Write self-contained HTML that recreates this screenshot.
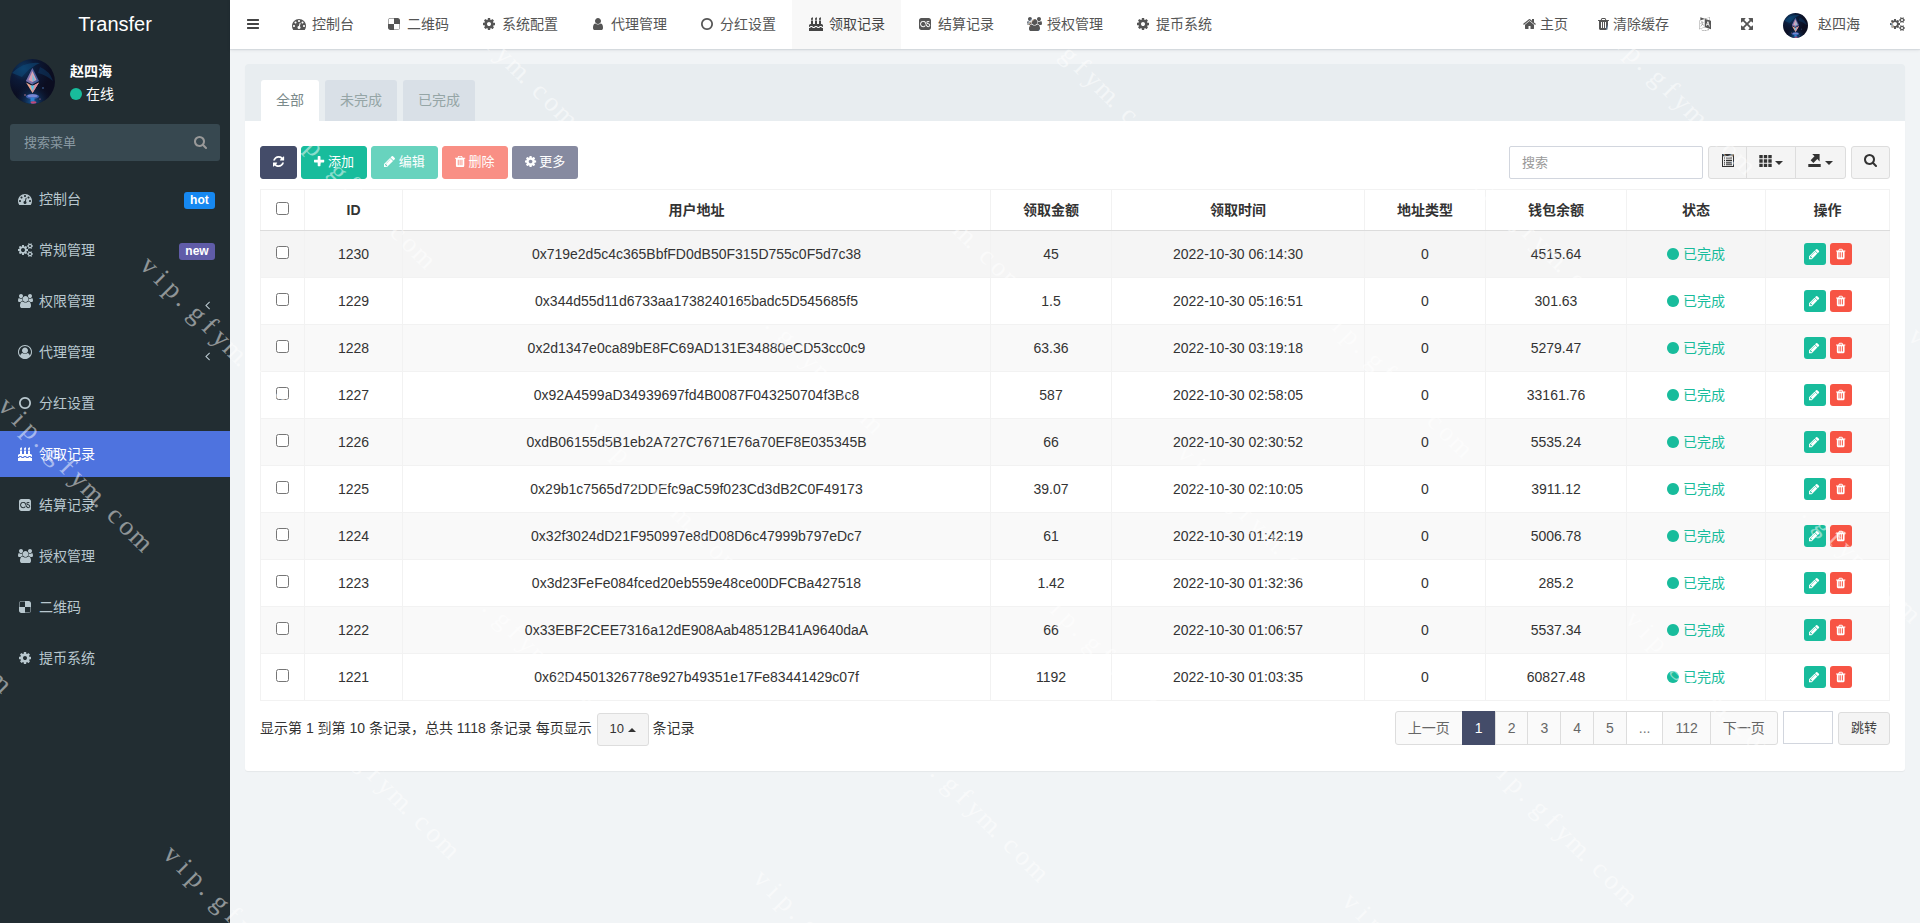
<!DOCTYPE html>
<html lang="zh-cn"><head><meta charset="utf-8"><title>Transfer</title>
<style>
*{box-sizing:border-box;margin:0;padding:0}
html,body{width:1920px;height:923px;overflow:hidden}
body{font-family:"Liberation Sans","Noto Sans CJK SC",sans-serif;font-size:14px;line-height:1.42857;color:#333;background:#f1f4f6}
ul{list-style:none}
svg.fa{display:inline-block;vertical-align:-0.143em;overflow:visible}
.wrapper{position:relative;width:1920px;height:923px;background:#f1f4f6;overflow:hidden}
.sidebar{position:absolute;left:0;top:0;width:230px;height:923px;background:#222d32;color:#b8c7ce}
.logo{height:50px;line-height:49px;text-align:center;color:#fff;font-size:20px;background:#222d32}
.user-panel{position:relative;height:65px;padding:10px}
.user-panel .avatar{position:absolute;left:10px;top:9px}
.user-panel .info{position:absolute;left:70px;top:12px;color:#fff;line-height:1}
.user-panel .info p{font-weight:bold;font-size:14px;margin-bottom:5px;line-height:18px}
.user-panel .ol{font-size:14px;display:block;line-height:18px}
.user-panel .ol i{display:inline-block;width:12px;height:12px;border-radius:50%;background:#18bc9c;margin-right:4px;vertical-align:-1px}
.sform{position:absolute;left:10px;top:124px;width:210px;height:37px;background:#374850;border-radius:3px;color:#8a9aa3;line-height:37px;padding-left:14px;font-size:13px}
.sform .sico{position:absolute;right:13px;top:11px;color:#999}
.smenu{position:absolute;left:0;top:176px;width:230px}
.smenu li{height:46px;margin-bottom:5px}
.smenu li a{display:block;height:46px;line-height:46px;padding-left:15px;color:#b8c7ce;position:relative;font-size:14px}
.smenu li.active a{background:#4e73df;color:#fff}
.smenu .mi{display:inline-block;width:20px;text-align:center;margin-right:4px}
.badge{position:absolute;right:15px;top:16px;height:17px;line-height:17px;padding:0 6.3px;font-size:12px;font-weight:bold;color:#fff;border-radius:3px}
.b-hot{background:#1688f1}
.b-new{background:#605ca8}
.arrow{position:absolute;right:20px;top:4px;color:#b8c7ce}
.topbar{position:absolute;left:230px;top:0;width:1690px;height:49px;background:#fff;box-shadow:0 1px 1px rgba(0,21,41,.07),0 1px 4px rgba(0,21,41,.08);z-index:5;color:#555}
.toggle{position:absolute;left:0;top:0;width:45px;height:49px;line-height:49px;text-align:center;color:#444}
.tnav{position:absolute;left:45px;top:0;height:49px;display:flex}
.tnav li{height:49px}
.tnav li a{display:block;height:49px;line-height:48px;padding:0 16px 0 15px;color:#555;font-size:14px;white-space:nowrap}
.tnav li a .fw{display:inline-block;width:18px;text-align:center;margin-right:4px}
.tnav li.active a{background:#f8f8f8;color:#444}
.rnav{position:absolute;right:0;top:0;height:49px;display:flex}
.rnav li a{display:block;height:49px;line-height:48px;padding:0 15px;color:#555;white-space:nowrap}
.rnav li a svg.fa+span{margin-left:4px}
.rnav .usr .avatar{vertical-align:middle;margin-right:10px;position:relative;top:0px}
.content{position:absolute;left:230px;top:49px;width:1690px;padding:15px}
.panel{background:#fff;border-radius:3px;width:1660px;box-shadow:0 1px 1px rgba(0,0,0,.05)}
.phead{height:57px;background:#e8edf0;border-radius:3px 3px 0 0;padding:16px 15px 0 16px}
.phead ul{display:flex}
.phead li{height:41px;line-height:40px;padding:0 15px;margin-right:6px;background:#d9e0e7;color:#95a5a6;border-radius:3px 3px 0 0}
.phead li.active{background:#fff;color:#7b8a8b}
.pbody{padding:15px;position:relative;height:650px}
.toolbar{height:44px;padding-top:10px;position:relative}
.btn{display:inline-block;height:33px;line-height:29px;padding:0 12px;border-radius:3px;color:#fff;font-size:13px;margin-right:4px;vertical-align:top;border:1px solid transparent;white-space:nowrap}
.btn b{font-weight:normal;margin-left:3.6px}
.b-pri{background:#444c69;border-color:#444c69}
.b-suc{background:#18bc9c;border-color:#18bc9c}
.b-dan{background:#f75444;border-color:#f75444}
.b-more{background:#868aa0}
.dis{opacity:.65}
.toolbar .right{position:absolute;right:0;top:10px;height:33px;display:flex}
.sinput{display:block;width:194px;height:33px;border:1px solid #d2d6de;border-radius:2px;line-height:31px;padding-left:12px;color:#999;background:#fff;margin-right:5px;font-size:13px}
.bgroup{display:flex;margin-right:5px}
.gb{display:block;position:relative;height:33px;line-height:31px;padding:0;text-align:center;width:39px;border:1px solid #ddd;background:#f4f4f4;color:#333;margin-left:-1px}
.bgroup .gb:first-child{border-radius:3px 0 0 3px;margin-left:0}
.bgroup .gb:last-child{border-radius:0 3px 3px 0}
.gb.single{border-radius:3px;margin-left:0}
.bgroup .gb:nth-child(2){width:50px}
.bgroup .gb:nth-child(3){width:51px}
.caret{display:inline-block;width:0;height:0;margin-left:4px;vertical-align:middle;border-top:4px solid #333;border-right:4px solid transparent;border-left:4px solid transparent}
.caret.up{border-top:0;border-bottom:4px solid #333;margin-left:0}
.tbl{border-collapse:collapse;table-layout:fixed;width:1630px;margin-top:9px;border:1px solid #f1f1f1}
.tbl th,.tbl td{border:1px solid #f2f2f2;text-align:center;vertical-align:middle;white-space:nowrap;overflow:hidden}
.tbl th{height:41px;font-weight:bold;color:#333;border-bottom:1px solid #dcdcdc;padding-top:2px}
.tbl td{height:47px;color:#333;padding-top:2px}
.tbl tr.odd td{background:#f9f9f9}
.tbl tr.hover td{background:#f5f5f5}
.cb{display:inline-block;width:13px;height:13px;border:1px solid #767676;border-radius:2.5px;background:#fff;vertical-align:middle;position:relative;top:-3px}
.tbl td.st{color:#18bc9c}
.st svg{margin-right:4px}
.bx{display:inline-block;width:22px;height:22px;border-radius:3px;color:#fff;line-height:20px;text-align:center;margin:0 2px;vertical-align:middle;position:relative;top:-1px}
.bx-s{background:#18bc9c}
.bx-d{background:#f75444}
.pfoot{position:relative;height:60px}
.pinfo{position:absolute;left:0;top:10px;line-height:34px;color:#333}
.psize{display:inline-block;height:33px;line-height:29px;border:1px solid #ddd;background:#f4f4f4;border-radius:3px;padding:0 12px;margin:0 0 0 1px;font-size:13px;vertical-align:top;position:relative;top:2px}
.pager{position:absolute;right:0;top:10px;height:34px}
.pager ul{display:flex;float:right}
.pager li{height:34px;line-height:32px;padding:0 12px;border:1px solid #ddd;background:#fafafa;color:#666;margin-left:-1px}
.pager li:first-child{border-radius:3px 0 0 3px}
.pager li:last-child{border-radius:0 3px 3px 0}
.pager li.active{background:#444c69;border-color:#444c69;color:#fff}
.pager li.dots{background:#fff;color:#777}
.jump{float:right;display:flex;margin-left:5px;margin-right:0.4px}
.jin{display:block;width:50px;height:33px;border:1px solid #d2d6de;background:#fff}
.jbtn{display:block;height:33px;line-height:31px;padding:0;width:51.3px;text-align:center;border:1px solid #ddd;background:#f4f4f4;border-radius:3px;margin-left:5.5px;margin-top:1px;color:#444;font-size:13px;line-height:29px}
.ab{position:absolute;margin:0 !important}
.wmlayer{position:absolute;left:0;top:0;width:1920px;height:923px;overflow:hidden;z-index:50;pointer-events:none}
.wm{position:absolute;transform-origin:0 0;transform:rotate(45deg);white-space:nowrap;font-family:"Liberation Serif",serif;font-size:27px;line-height:27px;color:rgba(255,255,255,.5)}
.wm i{display:inline-block;width:17px;text-align:center;font-style:normal}
.wm i.d{text-align:left;padding-left:2px}

</style></head><body>
<div class="wrapper">
<aside class="sidebar">
  <div class="logo">Transfer</div>
  <div class="user-panel"><svg class="avatar" width="45" height="45" viewBox="0 0 45 45"><defs><radialGradient id="ag45" cx="30%" cy="22%" r="60%"><stop offset="0" stop-color="#0d3b66"/><stop offset="0.45" stop-color="#0c1a38"/><stop offset="1" stop-color="#0b0d20"/></radialGradient><radialGradient id="ah45" cx="50%" cy="95%" r="45%"><stop offset="0" stop-color="#1763a8" stop-opacity=".9"/><stop offset="1" stop-color="#0b0d20" stop-opacity="0"/></radialGradient><clipPath id="ac45"><circle cx="22.5" cy="22.5" r="22.5"/></clipPath></defs><g clip-path="url(#ac45)"><rect width="45" height="45" fill="url(#ag45)"/><rect width="45" height="45" fill="url(#ah45)"/><path d="M2 14Q14 2 30 4Q20 8 12 18Z" fill="#0f4a7a" opacity=".55"/><path d="M30 8Q40 12 43 22Q36 16 28 14Z" fill="#0e3c68" opacity=".5"/><polygon points="22.5,9 29,22 22.5,25.5 16,22" fill="#4a5f9a"/><polygon points="22.5,9 22.5,25.5 16,22" fill="#7d6fa8"/><polygon points="22.5,12 26.5,21 22.5,23 18.5,21" fill="#d9a3b4"/><polygon points="22.5,15 25,21 22.5,22.5" fill="#6fc4e0"/><polygon points="16,23.5 22.5,27 29,23.5 22.5,34" fill="#e8a58e"/><polygon points="22.5,27 29,23.5 22.5,34" fill="#d88fa0"/><polygon points="20.5,26.5 24.5,26.5 22.5,32" fill="#58c3e6"/><ellipse cx="22.5" cy="37.5" rx="6.5" ry="2.6" fill="#3d5fae"/><ellipse cx="22.5" cy="36.8" rx="5" ry="1.6" fill="#7a86d0"/><rect x="20.5" y="38.5" width="4" height="4" fill="#2c7fd0"/><ellipse cx="23.5" cy="43.5" rx="3" ry="1.2" fill="#c04a7a"/><circle cx="33" cy="29" r=".7" fill="#5a8fd0"/><circle cx="15" cy="36" r=".7" fill="#e08aa0"/><circle cx="30" cy="40" r=".6" fill="#d070a0"/></g></svg><div class="info"><p>赵四海</p><span class="ol"><i></i>在线</span></div></div>
  <div class="sform"><span class="ph">搜索菜单</span><svg class="fa sico" width="13.000" height="14" viewBox="0 -1536 1664 1792" style=""><path fill="currentColor" transform="scale(1,-1)" d="M1152 704q0 185 -131.5 316.5t-316.5 131.5t-316.5 -131.5t-131.5 -316.5t131.5 -316.5t316.5 -131.5t316.5 131.5t131.5 316.5zM1664 -128q0 -52 -38 -90t-90 -38q-54 0 -90 38l-343 342q-179 -124 -399 -124q-143 0 -273.5 55.5t-225 150t-150 225t-55.5 273.5 t55.5 273.5t150 225t225 150t273.5 55.5t273.5 -55.5t225 -150t150 -225t55.5 -273.5q0 -220 -124 -399l343 -343q37 -37 37 -90z"/></svg></div>
  <ul class="smenu">
<li class=""><a><span class="mi"><svg class="fa " width="14.000" height="14" viewBox="0 -1536 1792 1792" style=""><path fill="currentColor" transform="scale(1,-1)" d="M384 384q0 53 -37.5 90.5t-90.5 37.5t-90.5 -37.5t-37.5 -90.5t37.5 -90.5t90.5 -37.5t90.5 37.5t37.5 90.5zM576 832q0 53 -37.5 90.5t-90.5 37.5t-90.5 -37.5t-37.5 -90.5t37.5 -90.5t90.5 -37.5t90.5 37.5t37.5 90.5zM1004 351l101 382q6 26 -7.5 48.5t-38.5 29.5 t-48 -6.5t-30 -39.5l-101 -382q-60 -5 -107 -43.5t-63 -98.5q-20 -77 20 -146t117 -89t146 20t89 117q16 60 -6 117t-72 91zM1664 384q0 53 -37.5 90.5t-90.5 37.5t-90.5 -37.5t-37.5 -90.5t37.5 -90.5t90.5 -37.5t90.5 37.5t37.5 90.5zM1024 1024q0 53 -37.5 90.5 t-90.5 37.5t-90.5 -37.5t-37.5 -90.5t37.5 -90.5t90.5 -37.5t90.5 37.5t37.5 90.5zM1472 832q0 53 -37.5 90.5t-90.5 37.5t-90.5 -37.5t-37.5 -90.5t37.5 -90.5t90.5 -37.5t90.5 37.5t37.5 90.5zM1792 384q0 -261 -141 -483q-19 -29 -54 -29h-1402q-35 0 -54 29 q-141 221 -141 483q0 182 71 348t191 286t286 191t348 71t348 -71t286 -191t191 -286t71 -348z"/></svg></span><span class="mt">控制台</span><span class="badge b-hot">hot</span></a></li>
<li class=""><a><span class="mi"><svg class="fa " width="15.000" height="14" viewBox="0 -1536 1920 1792" style=""><path fill="currentColor" transform="scale(1,-1)" d="M896 640q0 106 -75 181t-181 75t-181 -75t-75 -181t75 -181t181 -75t181 75t75 181zM1664 128q0 52 -38 90t-90 38t-90 -38t-38 -90q0 -53 37.5 -90.5t90.5 -37.5t90.5 37.5t37.5 90.5zM1664 1152q0 52 -38 90t-90 38t-90 -38t-38 -90q0 -53 37.5 -90.5t90.5 -37.5 t90.5 37.5t37.5 90.5zM1280 731v-185q0 -10 -7 -19.5t-16 -10.5l-155 -24q-11 -35 -32 -76q34 -48 90 -115q7 -11 7 -20q0 -12 -7 -19q-23 -30 -82.5 -89.5t-78.5 -59.5q-11 0 -21 7l-115 90q-37 -19 -77 -31q-11 -108 -23 -155q-7 -24 -30 -24h-186q-11 0 -20 7.5t-10 17.5 l-23 153q-34 10 -75 31l-118 -89q-7 -7 -20 -7q-11 0 -21 8q-144 133 -144 160q0 9 7 19q10 14 41 53t47 61q-23 44 -35 82l-152 24q-10 1 -17 9.5t-7 19.5v185q0 10 7 19.5t16 10.5l155 24q11 35 32 76q-34 48 -90 115q-7 11 -7 20q0 12 7 20q22 30 82 89t79 59q11 0 21 -7 l115 -90q34 18 77 32q11 108 23 154q7 24 30 24h186q11 0 20 -7.5t10 -17.5l23 -153q34 -10 75 -31l118 89q8 7 20 7q11 0 21 -8q144 -133 144 -160q0 -8 -7 -19q-12 -16 -42 -54t-45 -60q23 -48 34 -82l152 -23q10 -2 17 -10.5t7 -19.5zM1920 198v-140q0 -16 -149 -31 q-12 -27 -30 -52q51 -113 51 -138q0 -4 -4 -7q-122 -71 -124 -71q-8 0 -46 47t-52 68q-20 -2 -30 -2t-30 2q-14 -21 -52 -68t-46 -47q-2 0 -124 71q-4 3 -4 7q0 25 51 138q-18 25 -30 52q-149 15 -149 31v140q0 16 149 31q13 29 30 52q-51 113 -51 138q0 4 4 7q4 2 35 20 t59 34t30 16q8 0 46 -46.5t52 -67.5q20 2 30 2t30 -2q51 71 92 112l6 2q4 0 124 -70q4 -3 4 -7q0 -25 -51 -138q17 -23 30 -52q149 -15 149 -31zM1920 1222v-140q0 -16 -149 -31q-12 -27 -30 -52q51 -113 51 -138q0 -4 -4 -7q-122 -71 -124 -71q-8 0 -46 47t-52 68 q-20 -2 -30 -2t-30 2q-14 -21 -52 -68t-46 -47q-2 0 -124 71q-4 3 -4 7q0 25 51 138q-18 25 -30 52q-149 15 -149 31v140q0 16 149 31q13 29 30 52q-51 113 -51 138q0 4 4 7q4 2 35 20t59 34t30 16q8 0 46 -46.5t52 -67.5q20 2 30 2t30 -2q51 71 92 112l6 2q4 0 124 -70 q4 -3 4 -7q0 -25 -51 -138q17 -23 30 -52q149 -15 149 -31z"/></svg></span><span class="mt">常规管理</span><span class="badge b-new">new</span></a></li>
<li class=""><a><span class="mi"><svg class="fa " width="15.000" height="14" viewBox="0 -1536 1920 1792" style=""><path fill="currentColor" transform="scale(1,-1)" d="M593 640q-162 -5 -265 -128h-134q-82 0 -138 40.5t-56 118.5q0 353 124 353q6 0 43.5 -21t97.5 -42.5t119 -21.5q67 0 133 23q-5 -37 -5 -66q0 -139 81 -256zM1664 3q0 -120 -73 -189.5t-194 -69.5h-874q-121 0 -194 69.5t-73 189.5q0 53 3.5 103.5t14 109t26.5 108.5 t43 97.5t62 81t85.5 53.5t111.5 20q10 0 43 -21.5t73 -48t107 -48t135 -21.5t135 21.5t107 48t73 48t43 21.5q61 0 111.5 -20t85.5 -53.5t62 -81t43 -97.5t26.5 -108.5t14 -109t3.5 -103.5zM640 1280q0 -106 -75 -181t-181 -75t-181 75t-75 181t75 181t181 75t181 -75 t75 -181zM1344 896q0 -159 -112.5 -271.5t-271.5 -112.5t-271.5 112.5t-112.5 271.5t112.5 271.5t271.5 112.5t271.5 -112.5t112.5 -271.5zM1920 671q0 -78 -56 -118.5t-138 -40.5h-134q-103 123 -265 128q81 117 81 256q0 29 -5 66q66 -23 133 -23q59 0 119 21.5t97.5 42.5 t43.5 21q124 0 124 -353zM1792 1280q0 -106 -75 -181t-181 -75t-181 75t-75 181t75 181t181 75t181 -75t75 -181z"/></svg></span><span class="mt">权限管理</span><span class="arrow"><svg class="fa " width="5.000" height="14" viewBox="0 -1536 640 1792" style=""><path fill="currentColor" transform="scale(1,-1)" d="M627 992q0 -13 -10 -23l-393 -393l393 -393q10 -10 10 -23t-10 -23l-50 -50q-10 -10 -23 -10t-23 10l-466 466q-10 10 -10 23t10 23l466 466q10 10 23 10t23 -10l50 -50q10 -10 10 -23z"/></svg></span></a></li>
<li class=""><a><span class="mi"><svg class="fa " width="14.000" height="14" viewBox="0 -1536 1792 1792" style=""><path fill="currentColor" transform="scale(1,-1)" d="M896 1536q182 0 348 -71t286 -191t191 -286t71 -348q0 -181 -70.5 -347t-190.5 -286t-286 -191.5t-349 -71.5t-349 71t-285.5 191.5t-190.5 286t-71 347.5t71 348t191 286t286 191t348 71zM1515 185q149 205 149 455q0 156 -61 298t-164 245t-245 164t-298 61t-298 -61 t-245 -164t-164 -245t-61 -298q0 -250 149 -455q66 327 306 327q131 -128 313 -128t313 128q240 0 306 -327zM1280 832q0 159 -112.5 271.5t-271.5 112.5t-271.5 -112.5t-112.5 -271.5t112.5 -271.5t271.5 -112.5t271.5 112.5t112.5 271.5z"/></svg></span><span class="mt">代理管理</span><span class="arrow"><svg class="fa " width="5.000" height="14" viewBox="0 -1536 640 1792" style=""><path fill="currentColor" transform="scale(1,-1)" d="M627 992q0 -13 -10 -23l-393 -393l393 -393q10 -10 10 -23t-10 -23l-50 -50q-10 -10 -23 -10t-23 10l-466 466q-10 10 -10 23t10 23l466 466q10 10 23 10t23 -10l50 -50q10 -10 10 -23z"/></svg></span></a></li>
<li class=""><a><span class="mi"><svg class="fa " width="12.000" height="14" viewBox="0 -1536 1536 1792" style=""><path fill="currentColor" transform="scale(1,-1)" d="M768 1184q-148 0 -273 -73t-198 -198t-73 -273t73 -273t198 -198t273 -73t273 73t198 198t73 273t-73 273t-198 198t-273 73zM1536 640q0 -209 -103 -385.5t-279.5 -279.5t-385.5 -103t-385.5 103t-279.5 279.5t-103 385.5t103 385.5t279.5 279.5t385.5 103t385.5 -103 t279.5 -279.5t103 -385.5z"/></svg></span><span class="mt">分红设置</span></a></li>
<li class="active"><a><span class="mi"><svg class="fa " width="14.000" height="14" viewBox="0 -1536 1792 1792" style=""><path fill="currentColor" transform="scale(1,-1)" d="M1792 128v-384h-1792v384q45 0 85 14t59 27.5t47 37.5q30 27 51.5 38t56.5 11q24 0 44 -7t31 -15t33 -27q29 -25 47 -38t58 -27t86 -14q45 0 85 14.5t58 27t48 37.5q21 19 32.5 27t31 15t43.5 7q35 0 56.5 -11t51.5 -38q28 -24 47 -37.5t59 -27.5t85 -14t85 14t59 27.5 t47 37.5q30 27 51.5 38t56.5 11q34 0 55.5 -11t51.5 -38q28 -24 47 -37.5t59 -27.5t85 -14zM1792 448v-192q-24 0 -44 7t-31 15t-33 27q-29 25 -47 38t-58 27t-85 14q-46 0 -86 -14t-58 -27t-47 -38q-22 -19 -33 -27t-31 -15t-44 -7q-35 0 -56.5 11t-51.5 38q-29 25 -47 38 t-58 27t-86 14q-45 0 -85 -14.5t-58 -27t-48 -37.5q-21 -19 -32.5 -27t-31 -15t-43.5 -7q-35 0 -56.5 11t-51.5 38q-28 24 -47 37.5t-59 27.5t-85 14q-46 0 -86 -14t-58 -27t-47 -38q-30 -27 -51.5 -38t-56.5 -11v192q0 80 56 136t136 56h64v448h256v-448h256v448h256v-448 h256v448h256v-448h64q80 0 136 -56t56 -136zM512 1312q0 -77 -36 -118.5t-92 -41.5q-53 0 -90.5 37.5t-37.5 90.5q0 29 9.5 51t23.5 34t31 28t31 31.5t23.5 44.5t9.5 67q38 0 83 -74t45 -150zM1024 1312q0 -77 -36 -118.5t-92 -41.5q-53 0 -90.5 37.5t-37.5 90.5 q0 29 9.5 51t23.5 34t31 28t31 31.5t23.5 44.5t9.5 67q38 0 83 -74t45 -150zM1536 1312q0 -77 -36 -118.5t-92 -41.5q-53 0 -90.5 37.5t-37.5 90.5q0 29 9.5 51t23.5 34t31 28t31 31.5t23.5 44.5t9.5 67q38 0 83 -74t45 -150z"/></svg></span><span class="mt">领取记录</span></a></li>
<li class=""><a><span class="mi"><svg class="fa " width="12.000" height="14" viewBox="0 -1536 1536 1792" style=""><path fill="currentColor" transform="scale(1,-1)" d="M1432 484q0 173 -234 239q-35 10 -53 16.5t-38 25t-29 46.5q0 2 -2 8.5t-3 12t-1 7.5q0 36 24.5 59.5t60.5 23.5q54 0 71 -15h-1q20 -15 39 -51l93 71q-39 54 -49 64q-33 29 -67.5 39t-85.5 10q-80 0 -142 -57.5t-62 -137.5q0 -7 2 -23q16 -96 64.5 -140t148.5 -73 q29 -8 49 -15.5t45 -21.5t38.5 -34.5t13.5 -46.5v-5q1 -58 -40.5 -93t-100.5 -35q-97 0 -167 144q-23 47 -51.5 121.5t-48 125.5t-54 110.5t-74 95.5t-103.5 60.5t-147 24.5q-101 0 -192 -56t-144 -148t-50 -192v-1q4 -108 50.5 -199t133.5 -147.5t196 -56.5q186 0 279 110 q20 27 31 51l-60 109q-42 -80 -99 -116t-146 -36q-115 0 -191 87t-76 204q0 105 82 189t186 84q112 0 170 -53.5t104 -172.5q8 -21 25.5 -68.5t28.5 -76.5t31.5 -74.5t38.5 -74t45.5 -62.5t55.5 -53.5t66 -33t80 -13.5q107 0 183 69.5t76 174.5zM1536 1120v-960 q0 -119 -84.5 -203.5t-203.5 -84.5h-960q-119 0 -203.5 84.5t-84.5 203.5v960q0 119 84.5 203.5t203.5 84.5h960q119 0 203.5 -84.5t84.5 -203.5z"/></svg></span><span class="mt">结算记录</span></a></li>
<li class=""><a><span class="mi"><svg class="fa " width="15.000" height="14" viewBox="0 -1536 1920 1792" style=""><path fill="currentColor" transform="scale(1,-1)" d="M593 640q-162 -5 -265 -128h-134q-82 0 -138 40.5t-56 118.5q0 353 124 353q6 0 43.5 -21t97.5 -42.5t119 -21.5q67 0 133 23q-5 -37 -5 -66q0 -139 81 -256zM1664 3q0 -120 -73 -189.5t-194 -69.5h-874q-121 0 -194 69.5t-73 189.5q0 53 3.5 103.5t14 109t26.5 108.5 t43 97.5t62 81t85.5 53.5t111.5 20q10 0 43 -21.5t73 -48t107 -48t135 -21.5t135 21.5t107 48t73 48t43 21.5q61 0 111.5 -20t85.5 -53.5t62 -81t43 -97.5t26.5 -108.5t14 -109t3.5 -103.5zM640 1280q0 -106 -75 -181t-181 -75t-181 75t-75 181t75 181t181 75t181 -75 t75 -181zM1344 896q0 -159 -112.5 -271.5t-271.5 -112.5t-271.5 112.5t-112.5 271.5t112.5 271.5t271.5 112.5t271.5 -112.5t112.5 -271.5zM1920 671q0 -78 -56 -118.5t-138 -40.5h-134q-103 123 -265 128q81 117 81 256q0 29 -5 66q66 -23 133 -23q59 0 119 21.5t97.5 42.5 t43.5 21q124 0 124 -353zM1792 1280q0 -106 -75 -181t-181 -75t-181 75t-75 181t75 181t181 75t181 -75t75 -181z"/></svg></span><span class="mt">授权管理</span></a></li>
<li class=""><a><span class="mi"><svg class="fa " width="12.000" height="14" viewBox="0 -1536 1536 1792" style=""><path fill="currentColor" transform="scale(1,-1)" d="M1472 160v480h-704v704h-480q-93 0 -158.5 -65.5t-65.5 -158.5v-480h704v-704h480q93 0 158.5 65.5t65.5 158.5zM1536 1120v-960q0 -119 -84.5 -203.5t-203.5 -84.5h-960q-119 0 -203.5 84.5t-84.5 203.5v960q0 119 84.5 203.5t203.5 84.5h960q119 0 203.5 -84.5 t84.5 -203.5z"/></svg></span><span class="mt">二维码</span></a></li>
<li class=""><a><span class="mi"><svg class="fa " width="12.000" height="14" viewBox="0 -1536 1536 1792" style=""><path fill="currentColor" transform="scale(1,-1)" d="M1024 640q0 106 -75 181t-181 75t-181 -75t-75 -181t75 -181t181 -75t181 75t75 181zM1536 749v-222q0 -12 -8 -23t-20 -13l-185 -28q-19 -54 -39 -91q35 -50 107 -138q10 -12 10 -25t-9 -23q-27 -37 -99 -108t-94 -71q-12 0 -26 9l-138 108q-44 -23 -91 -38 q-16 -136 -29 -186q-7 -28 -36 -28h-222q-14 0 -24.5 8.5t-11.5 21.5l-28 184q-49 16 -90 37l-141 -107q-10 -9 -25 -9q-14 0 -25 11q-126 114 -165 168q-7 10 -7 23q0 12 8 23q15 21 51 66.5t54 70.5q-27 50 -41 99l-183 27q-13 2 -21 12.5t-8 23.5v222q0 12 8 23t19 13 l186 28q14 46 39 92q-40 57 -107 138q-10 12 -10 24q0 10 9 23q26 36 98.5 107.5t94.5 71.5q13 0 26 -10l138 -107q44 23 91 38q16 136 29 186q7 28 36 28h222q14 0 24.5 -8.5t11.5 -21.5l28 -184q49 -16 90 -37l142 107q9 9 24 9q13 0 25 -10q129 -119 165 -170q7 -8 7 -22 q0 -12 -8 -23q-15 -21 -51 -66.5t-54 -70.5q26 -50 41 -98l183 -28q13 -2 21 -12.5t8 -23.5z"/></svg></span><span class="mt">提币系统</span></a></li>
  </ul>
</aside>
<header class="topbar">
  <a class="toggle"><svg class="fa " width="12.000" height="14" viewBox="0 -1536 1536 1792" style=""><path fill="currentColor" transform="scale(1,-1)" d="M1536 192v-128q0 -26 -19 -45t-45 -19h-1408q-26 0 -45 19t-19 45v128q0 26 19 45t45 19h1408q26 0 45 -19t19 -45zM1536 704v-128q0 -26 -19 -45t-45 -19h-1408q-26 0 -45 19t-19 45v128q0 26 19 45t45 19h1408q26 0 45 -19t19 -45zM1536 1216v-128q0 -26 -19 -45 t-45 -19h-1408q-26 0 -45 19t-19 45v128q0 26 19 45t45 19h1408q26 0 45 -19t19 -45z"/></svg></a>
  <ul class="tnav"><li class=""><a><span class="fw"><svg class="fa " width="14.000" height="14" viewBox="0 -1536 1792 1792" style=""><path fill="currentColor" transform="scale(1,-1)" d="M384 384q0 53 -37.5 90.5t-90.5 37.5t-90.5 -37.5t-37.5 -90.5t37.5 -90.5t90.5 -37.5t90.5 37.5t37.5 90.5zM576 832q0 53 -37.5 90.5t-90.5 37.5t-90.5 -37.5t-37.5 -90.5t37.5 -90.5t90.5 -37.5t90.5 37.5t37.5 90.5zM1004 351l101 382q6 26 -7.5 48.5t-38.5 29.5 t-48 -6.5t-30 -39.5l-101 -382q-60 -5 -107 -43.5t-63 -98.5q-20 -77 20 -146t117 -89t146 20t89 117q16 60 -6 117t-72 91zM1664 384q0 53 -37.5 90.5t-90.5 37.5t-90.5 -37.5t-37.5 -90.5t37.5 -90.5t90.5 -37.5t90.5 37.5t37.5 90.5zM1024 1024q0 53 -37.5 90.5 t-90.5 37.5t-90.5 -37.5t-37.5 -90.5t37.5 -90.5t90.5 -37.5t90.5 37.5t37.5 90.5zM1472 832q0 53 -37.5 90.5t-90.5 37.5t-90.5 -37.5t-37.5 -90.5t37.5 -90.5t90.5 -37.5t90.5 37.5t37.5 90.5zM1792 384q0 -261 -141 -483q-19 -29 -54 -29h-1402q-35 0 -54 29 q-141 221 -141 483q0 182 71 348t191 286t286 191t348 71t348 -71t286 -191t191 -286t71 -348z"/></svg></span><span>控制台</span></a></li><li class=""><a><span class="fw"><svg class="fa " width="12.000" height="14" viewBox="0 -1536 1536 1792" style=""><path fill="currentColor" transform="scale(1,-1)" d="M1472 160v480h-704v704h-480q-93 0 -158.5 -65.5t-65.5 -158.5v-480h704v-704h480q93 0 158.5 65.5t65.5 158.5zM1536 1120v-960q0 -119 -84.5 -203.5t-203.5 -84.5h-960q-119 0 -203.5 84.5t-84.5 203.5v960q0 119 84.5 203.5t203.5 84.5h960q119 0 203.5 -84.5 t84.5 -203.5z"/></svg></span><span>二维码</span></a></li><li class=""><a><span class="fw"><svg class="fa " width="12.000" height="14" viewBox="0 -1536 1536 1792" style=""><path fill="currentColor" transform="scale(1,-1)" d="M1024 640q0 106 -75 181t-181 75t-181 -75t-75 -181t75 -181t181 -75t181 75t75 181zM1536 749v-222q0 -12 -8 -23t-20 -13l-185 -28q-19 -54 -39 -91q35 -50 107 -138q10 -12 10 -25t-9 -23q-27 -37 -99 -108t-94 -71q-12 0 -26 9l-138 108q-44 -23 -91 -38 q-16 -136 -29 -186q-7 -28 -36 -28h-222q-14 0 -24.5 8.5t-11.5 21.5l-28 184q-49 16 -90 37l-141 -107q-10 -9 -25 -9q-14 0 -25 11q-126 114 -165 168q-7 10 -7 23q0 12 8 23q15 21 51 66.5t54 70.5q-27 50 -41 99l-183 27q-13 2 -21 12.5t-8 23.5v222q0 12 8 23t19 13 l186 28q14 46 39 92q-40 57 -107 138q-10 12 -10 24q0 10 9 23q26 36 98.5 107.5t94.5 71.5q13 0 26 -10l138 -107q44 23 91 38q16 136 29 186q7 28 36 28h222q14 0 24.5 -8.5t11.5 -21.5l28 -184q49 -16 90 -37l142 107q9 9 24 9q13 0 25 -10q129 -119 165 -170q7 -8 7 -22 q0 -12 -8 -23q-15 -21 -51 -66.5t-54 -70.5q26 -50 41 -98l183 -28q13 -2 21 -12.5t8 -23.5z"/></svg></span><span>系统配置</span></a></li><li class=""><a><span class="fw"><svg class="fa " width="10.000" height="14" viewBox="0 -1536 1280 1792" style=""><path fill="currentColor" transform="scale(1,-1)" d="M1280 137q0 -109 -62.5 -187t-150.5 -78h-854q-88 0 -150.5 78t-62.5 187q0 85 8.5 160.5t31.5 152t58.5 131t94 89t134.5 34.5q131 -128 313 -128t313 128q76 0 134.5 -34.5t94 -89t58.5 -131t31.5 -152t8.5 -160.5zM1024 1024q0 -159 -112.5 -271.5t-271.5 -112.5 t-271.5 112.5t-112.5 271.5t112.5 271.5t271.5 112.5t271.5 -112.5t112.5 -271.5z"/></svg></span><span>代理管理</span></a></li><li class=""><a><span class="fw"><svg class="fa " width="12.000" height="14" viewBox="0 -1536 1536 1792" style=""><path fill="currentColor" transform="scale(1,-1)" d="M768 1184q-148 0 -273 -73t-198 -198t-73 -273t73 -273t198 -198t273 -73t273 73t198 198t73 273t-73 273t-198 198t-273 73zM1536 640q0 -209 -103 -385.5t-279.5 -279.5t-385.5 -103t-385.5 103t-279.5 279.5t-103 385.5t103 385.5t279.5 279.5t385.5 103t385.5 -103 t279.5 -279.5t103 -385.5z"/></svg></span><span>分红设置</span></a></li><li class="active"><a><span class="fw"><svg class="fa " width="14.000" height="14" viewBox="0 -1536 1792 1792" style=""><path fill="currentColor" transform="scale(1,-1)" d="M1792 128v-384h-1792v384q45 0 85 14t59 27.5t47 37.5q30 27 51.5 38t56.5 11q24 0 44 -7t31 -15t33 -27q29 -25 47 -38t58 -27t86 -14q45 0 85 14.5t58 27t48 37.5q21 19 32.5 27t31 15t43.5 7q35 0 56.5 -11t51.5 -38q28 -24 47 -37.5t59 -27.5t85 -14t85 14t59 27.5 t47 37.5q30 27 51.5 38t56.5 11q34 0 55.5 -11t51.5 -38q28 -24 47 -37.5t59 -27.5t85 -14zM1792 448v-192q-24 0 -44 7t-31 15t-33 27q-29 25 -47 38t-58 27t-85 14q-46 0 -86 -14t-58 -27t-47 -38q-22 -19 -33 -27t-31 -15t-44 -7q-35 0 -56.5 11t-51.5 38q-29 25 -47 38 t-58 27t-86 14q-45 0 -85 -14.5t-58 -27t-48 -37.5q-21 -19 -32.5 -27t-31 -15t-43.5 -7q-35 0 -56.5 11t-51.5 38q-28 24 -47 37.5t-59 27.5t-85 14q-46 0 -86 -14t-58 -27t-47 -38q-30 -27 -51.5 -38t-56.5 -11v192q0 80 56 136t136 56h64v448h256v-448h256v448h256v-448 h256v448h256v-448h64q80 0 136 -56t56 -136zM512 1312q0 -77 -36 -118.5t-92 -41.5q-53 0 -90.5 37.5t-37.5 90.5q0 29 9.5 51t23.5 34t31 28t31 31.5t23.5 44.5t9.5 67q38 0 83 -74t45 -150zM1024 1312q0 -77 -36 -118.5t-92 -41.5q-53 0 -90.5 37.5t-37.5 90.5 q0 29 9.5 51t23.5 34t31 28t31 31.5t23.5 44.5t9.5 67q38 0 83 -74t45 -150zM1536 1312q0 -77 -36 -118.5t-92 -41.5q-53 0 -90.5 37.5t-37.5 90.5q0 29 9.5 51t23.5 34t31 28t31 31.5t23.5 44.5t9.5 67q38 0 83 -74t45 -150z"/></svg></span><span>领取记录</span></a></li><li class=""><a><span class="fw"><svg class="fa " width="12.000" height="14" viewBox="0 -1536 1536 1792" style=""><path fill="currentColor" transform="scale(1,-1)" d="M1432 484q0 173 -234 239q-35 10 -53 16.5t-38 25t-29 46.5q0 2 -2 8.5t-3 12t-1 7.5q0 36 24.5 59.5t60.5 23.5q54 0 71 -15h-1q20 -15 39 -51l93 71q-39 54 -49 64q-33 29 -67.5 39t-85.5 10q-80 0 -142 -57.5t-62 -137.5q0 -7 2 -23q16 -96 64.5 -140t148.5 -73 q29 -8 49 -15.5t45 -21.5t38.5 -34.5t13.5 -46.5v-5q1 -58 -40.5 -93t-100.5 -35q-97 0 -167 144q-23 47 -51.5 121.5t-48 125.5t-54 110.5t-74 95.5t-103.5 60.5t-147 24.5q-101 0 -192 -56t-144 -148t-50 -192v-1q4 -108 50.5 -199t133.5 -147.5t196 -56.5q186 0 279 110 q20 27 31 51l-60 109q-42 -80 -99 -116t-146 -36q-115 0 -191 87t-76 204q0 105 82 189t186 84q112 0 170 -53.5t104 -172.5q8 -21 25.5 -68.5t28.5 -76.5t31.5 -74.5t38.5 -74t45.5 -62.5t55.5 -53.5t66 -33t80 -13.5q107 0 183 69.5t76 174.5zM1536 1120v-960 q0 -119 -84.5 -203.5t-203.5 -84.5h-960q-119 0 -203.5 84.5t-84.5 203.5v960q0 119 84.5 203.5t203.5 84.5h960q119 0 203.5 -84.5t84.5 -203.5z"/></svg></span><span>结算记录</span></a></li><li class=""><a><span class="fw"><svg class="fa " width="15.000" height="14" viewBox="0 -1536 1920 1792" style=""><path fill="currentColor" transform="scale(1,-1)" d="M593 640q-162 -5 -265 -128h-134q-82 0 -138 40.5t-56 118.5q0 353 124 353q6 0 43.5 -21t97.5 -42.5t119 -21.5q67 0 133 23q-5 -37 -5 -66q0 -139 81 -256zM1664 3q0 -120 -73 -189.5t-194 -69.5h-874q-121 0 -194 69.5t-73 189.5q0 53 3.5 103.5t14 109t26.5 108.5 t43 97.5t62 81t85.5 53.5t111.5 20q10 0 43 -21.5t73 -48t107 -48t135 -21.5t135 21.5t107 48t73 48t43 21.5q61 0 111.5 -20t85.5 -53.5t62 -81t43 -97.5t26.5 -108.5t14 -109t3.5 -103.5zM640 1280q0 -106 -75 -181t-181 -75t-181 75t-75 181t75 181t181 75t181 -75 t75 -181zM1344 896q0 -159 -112.5 -271.5t-271.5 -112.5t-271.5 112.5t-112.5 271.5t112.5 271.5t271.5 112.5t271.5 -112.5t112.5 -271.5zM1920 671q0 -78 -56 -118.5t-138 -40.5h-134q-103 123 -265 128q81 117 81 256q0 29 -5 66q66 -23 133 -23q59 0 119 21.5t97.5 42.5 t43.5 21q124 0 124 -353zM1792 1280q0 -106 -75 -181t-181 -75t-181 75t-75 181t75 181t181 75t181 -75t75 -181z"/></svg></span><span>授权管理</span></a></li><li class=""><a><span class="fw"><svg class="fa " width="12.000" height="14" viewBox="0 -1536 1536 1792" style=""><path fill="currentColor" transform="scale(1,-1)" d="M1024 640q0 106 -75 181t-181 75t-181 -75t-75 -181t75 -181t181 -75t181 75t75 181zM1536 749v-222q0 -12 -8 -23t-20 -13l-185 -28q-19 -54 -39 -91q35 -50 107 -138q10 -12 10 -25t-9 -23q-27 -37 -99 -108t-94 -71q-12 0 -26 9l-138 108q-44 -23 -91 -38 q-16 -136 -29 -186q-7 -28 -36 -28h-222q-14 0 -24.5 8.5t-11.5 21.5l-28 184q-49 16 -90 37l-141 -107q-10 -9 -25 -9q-14 0 -25 11q-126 114 -165 168q-7 10 -7 23q0 12 8 23q15 21 51 66.5t54 70.5q-27 50 -41 99l-183 27q-13 2 -21 12.5t-8 23.5v222q0 12 8 23t19 13 l186 28q14 46 39 92q-40 57 -107 138q-10 12 -10 24q0 10 9 23q26 36 98.5 107.5t94.5 71.5q13 0 26 -10l138 -107q44 23 91 38q16 136 29 186q7 28 36 28h222q14 0 24.5 -8.5t11.5 -21.5l28 -184q49 -16 90 -37l142 107q9 9 24 9q13 0 25 -10q129 -119 165 -170q7 -8 7 -22 q0 -12 -8 -23q-15 -21 -51 -66.5t-54 -70.5q26 -50 41 -98l183 -28q13 -2 21 -12.5t8 -23.5z"/></svg></span><span>提币系统</span></a></li></ul>
  <ul class="rnav">
    <li><a><svg class="fa " width="13.000" height="14" viewBox="0 -1536 1664 1792" style=""><path fill="currentColor" transform="scale(1,-1)" d="M1408 544v-480q0 -26 -19 -45t-45 -19h-384v384h-256v-384h-384q-26 0 -45 19t-19 45v480q0 1 0.5 3t0.5 3l575 474l575 -474q1 -2 1 -6zM1631 613l-62 -74q-8 -9 -21 -11h-3q-13 0 -21 7l-692 577l-692 -577q-12 -8 -24 -7q-13 2 -21 11l-62 74q-8 10 -7 23.5t11 21.5 l719 599q32 26 76 26t76 -26l244 -204v195q0 14 9 23t23 9h192q14 0 23 -9t9 -23v-408l219 -182q10 -8 11 -21.5t-7 -23.5z"/></svg><span>主页</span></a></li>
    <li><a><svg class="fa " width="11.000" height="14" viewBox="0 -1536 1408 1792" style=""><path fill="currentColor" transform="scale(1,-1)" d="M512 160v704q0 14 -9 23t-23 9h-64q-14 0 -23 -9t-9 -23v-704q0 -14 9 -23t23 -9h64q14 0 23 9t9 23zM768 160v704q0 14 -9 23t-23 9h-64q-14 0 -23 -9t-9 -23v-704q0 -14 9 -23t23 -9h64q14 0 23 9t9 23zM1024 160v704q0 14 -9 23t-23 9h-64q-14 0 -23 -9t-9 -23v-704 q0 -14 9 -23t23 -9h64q14 0 23 9t9 23zM480 1152h448l-48 117q-7 9 -17 11h-317q-10 -2 -17 -11zM1408 1120v-64q0 -14 -9 -23t-23 -9h-96v-948q0 -83 -47 -143.5t-113 -60.5h-832q-66 0 -113 58.5t-47 141.5v952h-96q-14 0 -23 9t-9 23v64q0 14 9 23t23 9h309l70 167 q15 37 54 63t79 26h320q40 0 79 -26t54 -63l70 -167h309q14 0 23 -9t9 -23z"/></svg><span>清除缓存</span></a></li>
    <li><a><svg class="fa " width="12.000" height="14" viewBox="0 -1536 1536 1792" style=""><path fill="currentColor" transform="scale(1,-1)" d="M654 458q-1 -3 -12.5 0.5t-31.5 11.5l-20 9q-44 20 -87 49q-7 5 -41 31.5t-38 28.5q-67 -103 -134 -181q-81 -95 -105 -110q-4 -2 -19.5 -4t-18.5 0q6 4 82 92q21 24 85.5 115t78.5 118q17 30 51 98.5t36 77.5q-8 1 -110 -33q-8 -2 -27.5 -7.5t-34.5 -9.5t-17 -5 q-2 -2 -2 -10.5t-1 -9.5q-5 -10 -31 -15q-23 -7 -47 0q-18 4 -28 21q-4 6 -5 23q6 2 24.5 5t29.5 6q58 16 105 32q100 35 102 35q10 2 43 19.5t44 21.5q9 3 21.5 8t14.5 5.5t6 -0.5q2 -12 -1 -33q0 -2 -12.5 -27t-26.5 -53.5t-17 -33.5q-25 -50 -77 -131l64 -28 q12 -6 74.5 -32t67.5 -28q4 -1 10.5 -25.5t4.5 -30.5zM449 944q3 -15 -4 -28q-12 -23 -50 -38q-30 -12 -60 -12q-26 3 -49 26q-14 15 -18 41l1 3q3 -3 19.5 -5t26.5 0t58 16q36 12 55 14q17 0 21 -17zM1147 815l63 -227l-139 42zM39 15l694 232v1032l-694 -233v-1031z M1280 332l102 -31l-181 657l-100 31l-216 -536l102 -31l45 110l211 -65zM777 1294l573 -184v380zM1088 -29l158 -13l-54 -160l-40 66q-130 -83 -276 -108q-58 -12 -91 -12h-84q-79 0 -199.5 39t-183.5 85q-8 7 -8 16q0 8 5 13.5t13 5.5q4 0 18 -7.5t30.5 -16.5t20.5 -11 q73 -37 159.5 -61.5t157.5 -24.5q95 0 167 14.5t157 50.5q15 7 30.5 15.5t34 19t28.5 16.5zM1536 1050v-1079l-774 246q-14 -6 -375 -127.5t-368 -121.5q-13 0 -18 13q0 1 -1 3v1078q3 9 4 10q5 6 20 11q107 36 149 50v384l558 -198q2 0 160.5 55t316 108.5t161.5 53.5 q20 0 20 -21v-418z"/></svg></a></li>
    <li><a><svg class="fa " width="12.000" height="14" viewBox="0 -1536 1536 1792" style=""><path fill="currentColor" transform="scale(1,-1)" d="M1283 995l-355 -355l355 -355l144 144q29 31 70 14q39 -17 39 -59v-448q0 -26 -19 -45t-45 -19h-448q-42 0 -59 40q-17 39 14 69l144 144l-355 355l-355 -355l144 -144q31 -30 14 -69q-17 -40 -59 -40h-448q-26 0 -45 19t-19 45v448q0 42 40 59q39 17 69 -14l144 -144 l355 355l-355 355l-144 -144q-19 -19 -45 -19q-12 0 -24 5q-40 17 -40 59v448q0 26 19 45t45 19h448q42 0 59 -40q17 -39 -14 -69l-144 -144l355 -355l355 355l-144 144q-31 30 -14 69q17 40 59 40h448q26 0 45 -19t19 -45v-448q0 -42 -39 -59q-13 -5 -25 -5q-26 0 -45 19z "/></svg></a></li>
    <li class="usr"><a><svg class="avatar" width="25" height="25" viewBox="0 0 45 45"><defs><radialGradient id="ag25" cx="30%" cy="22%" r="60%"><stop offset="0" stop-color="#0d3b66"/><stop offset="0.45" stop-color="#0c1a38"/><stop offset="1" stop-color="#0b0d20"/></radialGradient><radialGradient id="ah25" cx="50%" cy="95%" r="45%"><stop offset="0" stop-color="#1763a8" stop-opacity=".9"/><stop offset="1" stop-color="#0b0d20" stop-opacity="0"/></radialGradient><clipPath id="ac25"><circle cx="22.5" cy="22.5" r="22.5"/></clipPath></defs><g clip-path="url(#ac25)"><rect width="45" height="45" fill="url(#ag25)"/><rect width="45" height="45" fill="url(#ah25)"/><path d="M2 14Q14 2 30 4Q20 8 12 18Z" fill="#0f4a7a" opacity=".55"/><path d="M30 8Q40 12 43 22Q36 16 28 14Z" fill="#0e3c68" opacity=".5"/><polygon points="22.5,9 29,22 22.5,25.5 16,22" fill="#4a5f9a"/><polygon points="22.5,9 22.5,25.5 16,22" fill="#7d6fa8"/><polygon points="22.5,12 26.5,21 22.5,23 18.5,21" fill="#d9a3b4"/><polygon points="22.5,15 25,21 22.5,22.5" fill="#6fc4e0"/><polygon points="16,23.5 22.5,27 29,23.5 22.5,34" fill="#e8a58e"/><polygon points="22.5,27 29,23.5 22.5,34" fill="#d88fa0"/><polygon points="20.5,26.5 24.5,26.5 22.5,32" fill="#58c3e6"/><ellipse cx="22.5" cy="37.5" rx="6.5" ry="2.6" fill="#3d5fae"/><ellipse cx="22.5" cy="36.8" rx="5" ry="1.6" fill="#7a86d0"/><rect x="20.5" y="38.5" width="4" height="4" fill="#2c7fd0"/><ellipse cx="23.5" cy="43.5" rx="3" ry="1.2" fill="#c04a7a"/><circle cx="33" cy="29" r=".7" fill="#5a8fd0"/><circle cx="15" cy="36" r=".7" fill="#e08aa0"/><circle cx="30" cy="40" r=".6" fill="#d070a0"/></g></svg><span>赵四海</span></a></li>
    <li><a><svg class="fa " width="15.000" height="14" viewBox="0 -1536 1920 1792" style=""><path fill="currentColor" transform="scale(1,-1)" d="M896 640q0 106 -75 181t-181 75t-181 -75t-75 -181t75 -181t181 -75t181 75t75 181zM1664 128q0 52 -38 90t-90 38t-90 -38t-38 -90q0 -53 37.5 -90.5t90.5 -37.5t90.5 37.5t37.5 90.5zM1664 1152q0 52 -38 90t-90 38t-90 -38t-38 -90q0 -53 37.5 -90.5t90.5 -37.5 t90.5 37.5t37.5 90.5zM1280 731v-185q0 -10 -7 -19.5t-16 -10.5l-155 -24q-11 -35 -32 -76q34 -48 90 -115q7 -11 7 -20q0 -12 -7 -19q-23 -30 -82.5 -89.5t-78.5 -59.5q-11 0 -21 7l-115 90q-37 -19 -77 -31q-11 -108 -23 -155q-7 -24 -30 -24h-186q-11 0 -20 7.5t-10 17.5 l-23 153q-34 10 -75 31l-118 -89q-7 -7 -20 -7q-11 0 -21 8q-144 133 -144 160q0 9 7 19q10 14 41 53t47 61q-23 44 -35 82l-152 24q-10 1 -17 9.5t-7 19.5v185q0 10 7 19.5t16 10.5l155 24q11 35 32 76q-34 48 -90 115q-7 11 -7 20q0 12 7 20q22 30 82 89t79 59q11 0 21 -7 l115 -90q34 18 77 32q11 108 23 154q7 24 30 24h186q11 0 20 -7.5t10 -17.5l23 -153q34 -10 75 -31l118 89q8 7 20 7q11 0 21 -8q144 -133 144 -160q0 -8 -7 -19q-12 -16 -42 -54t-45 -60q23 -48 34 -82l152 -23q10 -2 17 -10.5t7 -19.5zM1920 198v-140q0 -16 -149 -31 q-12 -27 -30 -52q51 -113 51 -138q0 -4 -4 -7q-122 -71 -124 -71q-8 0 -46 47t-52 68q-20 -2 -30 -2t-30 2q-14 -21 -52 -68t-46 -47q-2 0 -124 71q-4 3 -4 7q0 25 51 138q-18 25 -30 52q-149 15 -149 31v140q0 16 149 31q13 29 30 52q-51 113 -51 138q0 4 4 7q4 2 35 20 t59 34t30 16q8 0 46 -46.5t52 -67.5q20 2 30 2t30 -2q51 71 92 112l6 2q4 0 124 -70q4 -3 4 -7q0 -25 -51 -138q17 -23 30 -52q149 -15 149 -31zM1920 1222v-140q0 -16 -149 -31q-12 -27 -30 -52q51 -113 51 -138q0 -4 -4 -7q-122 -71 -124 -71q-8 0 -46 47t-52 68 q-20 -2 -30 -2t-30 2q-14 -21 -52 -68t-46 -47q-2 0 -124 71q-4 3 -4 7q0 25 51 138q-18 25 -30 52q-149 15 -149 31v140q0 16 149 31q13 29 30 52q-51 113 -51 138q0 4 4 7q4 2 35 20t59 34t30 16q8 0 46 -46.5t52 -67.5q20 2 30 2t30 -2q51 71 92 112l6 2q4 0 124 -70 q4 -3 4 -7q0 -25 -51 -138q17 -23 30 -52q149 -15 149 -31z"/></svg></a></li>
  </ul>
</header>
<div class="content">
  <div class="panel">
    <div class="phead"><ul><li class="active">全部</li><li>未完成</li><li>已完成</li></ul></div>
    <div class="pbody">
      <div class="toolbar">
        <span class="btn b-pri"><svg class="fa " width="11.143" height="13" viewBox="0 -1536 1536 1792" style=""><path fill="currentColor" transform="scale(1,-1)" d="M1511 480q0 -5 -1 -7q-64 -268 -268 -434.5t-478 -166.5q-146 0 -282.5 55t-243.5 157l-129 -129q-19 -19 -45 -19t-45 19t-19 45v448q0 26 19 45t45 19h448q26 0 45 -19t19 -45t-19 -45l-137 -137q71 -66 161 -102t187 -36q134 0 250 65t186 179q11 17 53 117 q8 23 30 23h192q13 0 22.5 -9.5t9.5 -22.5zM1536 1280v-448q0 -26 -19 -45t-45 -19h-448q-26 0 -45 19t-19 45t19 45l138 138q-148 137 -349 137q-134 0 -250 -65t-186 -179q-11 -17 -53 -117q-8 -23 -30 -23h-199q-13 0 -22.5 9.5t-9.5 22.5v7q65 268 270 434.5t480 166.5 q146 0 284 -55.5t245 -156.5l130 129q19 19 45 19t45 -19t19 -45z"/></svg></span><span class="btn b-suc"><svg class="fa " width="10.214" height="13" viewBox="0 -1536 1408 1792" style=""><path fill="currentColor" transform="scale(1,-1)" d="M1408 800v-192q0 -40 -28 -68t-68 -28h-416v-416q0 -40 -28 -68t-68 -28h-192q-40 0 -68 28t-28 68v416h-416q-40 0 -68 28t-28 68v192q0 40 28 68t68 28h416v416q0 40 28 68t68 28h192q40 0 68 -28t28 -68v-416h416q40 0 68 -28t28 -68z"/></svg><b>添加</b></span><span class="btn b-suc dis"><svg class="fa " width="11.143" height="13" viewBox="0 -1536 1536 1792" style=""><path fill="currentColor" transform="scale(1,-1)" d="M363 0l91 91l-235 235l-91 -91v-107h128v-128h107zM886 928q0 22 -22 22q-10 0 -17 -7l-542 -542q-7 -7 -7 -17q0 -22 22 -22q10 0 17 7l542 542q7 7 7 17zM832 1120l416 -416l-832 -832h-416v416zM1515 1024q0 -53 -37 -90l-166 -166l-416 416l166 165q36 38 90 38 q53 0 91 -38l235 -234q37 -39 37 -91z"/></svg><b>编辑</b></span><span class="btn b-dan dis"><svg class="fa " width="10.214" height="13" viewBox="0 -1536 1408 1792" style=""><path fill="currentColor" transform="scale(1,-1)" d="M512 160v704q0 14 -9 23t-23 9h-64q-14 0 -23 -9t-9 -23v-704q0 -14 9 -23t23 -9h64q14 0 23 9t9 23zM768 160v704q0 14 -9 23t-23 9h-64q-14 0 -23 -9t-9 -23v-704q0 -14 9 -23t23 -9h64q14 0 23 9t9 23zM1024 160v704q0 14 -9 23t-23 9h-64q-14 0 -23 -9t-9 -23v-704 q0 -14 9 -23t23 -9h64q14 0 23 9t9 23zM480 1152h448l-48 117q-7 9 -17 11h-317q-10 -2 -17 -11zM1408 1120v-64q0 -14 -9 -23t-23 -9h-96v-948q0 -83 -47 -143.5t-113 -60.5h-832q-66 0 -113 58.5t-47 141.5v952h-96q-14 0 -23 9t-9 23v64q0 14 9 23t23 9h309l70 167 q15 37 54 63t79 26h320q40 0 79 -26t54 -63l70 -167h309q14 0 23 -9t9 -23z"/></svg><b>删除</b></span><span class="btn b-more"><svg class="fa " width="11.143" height="13" viewBox="0 -1536 1536 1792" style=""><path fill="currentColor" transform="scale(1,-1)" d="M1024 640q0 106 -75 181t-181 75t-181 -75t-75 -181t75 -181t181 -75t181 75t75 181zM1536 749v-222q0 -12 -8 -23t-20 -13l-185 -28q-19 -54 -39 -91q35 -50 107 -138q10 -12 10 -25t-9 -23q-27 -37 -99 -108t-94 -71q-12 0 -26 9l-138 108q-44 -23 -91 -38 q-16 -136 -29 -186q-7 -28 -36 -28h-222q-14 0 -24.5 8.5t-11.5 21.5l-28 184q-49 16 -90 37l-141 -107q-10 -9 -25 -9q-14 0 -25 11q-126 114 -165 168q-7 10 -7 23q0 12 8 23q15 21 51 66.5t54 70.5q-27 50 -41 99l-183 27q-13 2 -21 12.5t-8 23.5v222q0 12 8 23t19 13 l186 28q14 46 39 92q-40 57 -107 138q-10 12 -10 24q0 10 9 23q26 36 98.5 107.5t94.5 71.5q13 0 26 -10l138 -107q44 23 91 38q16 136 29 186q7 28 36 28h222q14 0 24.5 -8.5t11.5 -21.5l28 -184q49 -16 90 -37l142 107q9 9 24 9q13 0 25 -10q129 -119 165 -170q7 -8 7 -22 q0 -12 -8 -23q-15 -21 -51 -66.5t-54 -70.5q26 -50 41 -98l183 -28q13 -2 21 -12.5t8 -23.5z"/></svg><b>更多</b></span>
        <div class="right">
          <span class="sinput">搜索</span>
          <span class="bgroup"><span class="gb"><svg class="ab" style="left:13px;top:7px" width="12" height="13" viewBox="0 0 12 13"><path fill="#333" fill-rule="evenodd" d="M0 0h12v13H0zM1 2.2v9.8h10V2.2zM2 3.4h1v1.2H2zM4 3.4h6v1.2H4zM2 5.7h1v1.5H2zM4 5.7h6v1.5H4zM2 8.3h1v1.1H2zM4 8.3h6v1.1H4zM2 10.2h1v1.1H2zM4 10.2h6v1.1H4z"/></svg></span><span class="gb"><svg class="ab" style="left:11.5px;top:8px" width="13" height="12" viewBox="0 0 13 12"><path fill="#333" d="M0.3 0h3.4v3.2H0.3zM4.8 0h3.4v3.2H4.8zM9.3 0h3.4v3.2H9.3zM0.3 4.3h3.4v3.4H0.3zM4.8 4.3h3.4v3.4H4.8zM9.3 4.3h3.4v3.4H9.3zM0.3 8.8h3.4v3.2H0.3zM4.8 8.8h3.4v3.2H4.8zM9.3 8.8h3.4v3.2H9.3z"/></svg><i class="caret ab" style="left:28px;top:14px"></i></span><span class="gb"><svg class="ab" style="left:12px;top:7px" width="13" height="13" viewBox="0 0 13 13"><path fill="#333" d="M0.3 10h12.4v3H0.3zM4.2 0h7.4v7.4L9.3 5.1 5.4 9 2.6 6.2 6.5 2.3z"/></svg><i class="caret ab" style="left:29px;top:14px"></i></span></span>
          <span class="gb single"><svg class="fa ab" width="13.000" height="14" viewBox="0 -1536 1664 1792" style="left:12px;top:6px"><path fill="currentColor" transform="scale(1,-1)" d="M1152 704q0 185 -131.5 316.5t-316.5 131.5t-316.5 -131.5t-131.5 -316.5t131.5 -316.5t316.5 -131.5t316.5 131.5t131.5 316.5zM1664 -128q0 -52 -38 -90t-90 -38q-54 0 -90 38l-343 342q-179 -124 -399 -124q-143 0 -273.5 55.5t-225 150t-150 225t-55.5 273.5 t55.5 273.5t150 225t225 150t273.5 55.5t273.5 -55.5t225 -150t150 -225t55.5 -273.5q0 -220 -124 -399l343 -343q37 -37 37 -90z"/></svg></span>
        </div>
      </div>
      <table class="tbl">
        <colgroup><col style="width:44px"><col style="width:98px"><col style="width:588px"><col style="width:121px"><col style="width:253px"><col style="width:121px"><col style="width:141px"><col style="width:139px"><col style="width:124px"></colgroup>
        <thead><tr><th class="ck"><span class="cb"></span></th><th>ID</th><th>用户地址</th><th>领取金额</th><th>领取时间</th><th>地址类型</th><th>钱包余额</th><th>状态</th><th>操作</th></tr></thead>
        <tbody>
<tr class="hover"><td class="ck"><span class="cb"></span></td><td>1230</td><td>0x719e2d5c4c365BbfFD0dB50F315D755c0F5d7c38</td><td>45</td><td>2022-10-30 06:14:30</td><td>0</td><td>4515.64</td><td class="st"><svg class="fa " width="12.000" height="14" viewBox="0 -1536 1536 1792" style=""><path fill="currentColor" transform="scale(1,-1)" d="M1536 640q0 -209 -103 -385.5t-279.5 -279.5t-385.5 -103t-385.5 103t-279.5 279.5t-103 385.5t103 385.5t279.5 279.5t385.5 103t385.5 -103t279.5 -279.5t103 -385.5z"/></svg><span>已完成</span></td><td class="op"><span class="bx bx-s"><svg class="fa " width="10.286" height="12" viewBox="0 -1536 1536 1792" style=""><path fill="currentColor" transform="scale(1,-1)" d="M363 0l91 91l-235 235l-91 -91v-107h128v-128h107zM886 928q0 22 -22 22q-10 0 -17 -7l-542 -542q-7 -7 -7 -17q0 -22 22 -22q10 0 17 7l542 542q7 7 7 17zM832 1120l416 -416l-832 -832h-416v416zM1515 1024q0 -53 -37 -90l-166 -166l-416 416l166 165q36 38 90 38 q53 0 91 -38l235 -234q37 -39 37 -91z"/></svg></span><span class="bx bx-d"><svg class="fa " width="9.429" height="12" viewBox="0 -1536 1408 1792" style=""><path fill="currentColor" transform="scale(1,-1)" d="M512 160v704q0 14 -9 23t-23 9h-64q-14 0 -23 -9t-9 -23v-704q0 -14 9 -23t23 -9h64q14 0 23 9t9 23zM768 160v704q0 14 -9 23t-23 9h-64q-14 0 -23 -9t-9 -23v-704q0 -14 9 -23t23 -9h64q14 0 23 9t9 23zM1024 160v704q0 14 -9 23t-23 9h-64q-14 0 -23 -9t-9 -23v-704 q0 -14 9 -23t23 -9h64q14 0 23 9t9 23zM480 1152h448l-48 117q-7 9 -17 11h-317q-10 -2 -17 -11zM1408 1120v-64q0 -14 -9 -23t-23 -9h-96v-948q0 -83 -47 -143.5t-113 -60.5h-832q-66 0 -113 58.5t-47 141.5v952h-96q-14 0 -23 9t-9 23v64q0 14 9 23t23 9h309l70 167 q15 37 54 63t79 26h320q40 0 79 -26t54 -63l70 -167h309q14 0 23 -9t9 -23z"/></svg></span></td></tr>
<tr class=""><td class="ck"><span class="cb"></span></td><td>1229</td><td>0x344d55d11d6733aa1738240165badc5D545685f5</td><td>1.5</td><td>2022-10-30 05:16:51</td><td>0</td><td>301.63</td><td class="st"><svg class="fa " width="12.000" height="14" viewBox="0 -1536 1536 1792" style=""><path fill="currentColor" transform="scale(1,-1)" d="M1536 640q0 -209 -103 -385.5t-279.5 -279.5t-385.5 -103t-385.5 103t-279.5 279.5t-103 385.5t103 385.5t279.5 279.5t385.5 103t385.5 -103t279.5 -279.5t103 -385.5z"/></svg><span>已完成</span></td><td class="op"><span class="bx bx-s"><svg class="fa " width="10.286" height="12" viewBox="0 -1536 1536 1792" style=""><path fill="currentColor" transform="scale(1,-1)" d="M363 0l91 91l-235 235l-91 -91v-107h128v-128h107zM886 928q0 22 -22 22q-10 0 -17 -7l-542 -542q-7 -7 -7 -17q0 -22 22 -22q10 0 17 7l542 542q7 7 7 17zM832 1120l416 -416l-832 -832h-416v416zM1515 1024q0 -53 -37 -90l-166 -166l-416 416l166 165q36 38 90 38 q53 0 91 -38l235 -234q37 -39 37 -91z"/></svg></span><span class="bx bx-d"><svg class="fa " width="9.429" height="12" viewBox="0 -1536 1408 1792" style=""><path fill="currentColor" transform="scale(1,-1)" d="M512 160v704q0 14 -9 23t-23 9h-64q-14 0 -23 -9t-9 -23v-704q0 -14 9 -23t23 -9h64q14 0 23 9t9 23zM768 160v704q0 14 -9 23t-23 9h-64q-14 0 -23 -9t-9 -23v-704q0 -14 9 -23t23 -9h64q14 0 23 9t9 23zM1024 160v704q0 14 -9 23t-23 9h-64q-14 0 -23 -9t-9 -23v-704 q0 -14 9 -23t23 -9h64q14 0 23 9t9 23zM480 1152h448l-48 117q-7 9 -17 11h-317q-10 -2 -17 -11zM1408 1120v-64q0 -14 -9 -23t-23 -9h-96v-948q0 -83 -47 -143.5t-113 -60.5h-832q-66 0 -113 58.5t-47 141.5v952h-96q-14 0 -23 9t-9 23v64q0 14 9 23t23 9h309l70 167 q15 37 54 63t79 26h320q40 0 79 -26t54 -63l70 -167h309q14 0 23 -9t9 -23z"/></svg></span></td></tr>
<tr class="odd"><td class="ck"><span class="cb"></span></td><td>1228</td><td>0x2d1347e0ca89bE8FC69AD131E34880eCD53cc0c9</td><td>63.36</td><td>2022-10-30 03:19:18</td><td>0</td><td>5279.47</td><td class="st"><svg class="fa " width="12.000" height="14" viewBox="0 -1536 1536 1792" style=""><path fill="currentColor" transform="scale(1,-1)" d="M1536 640q0 -209 -103 -385.5t-279.5 -279.5t-385.5 -103t-385.5 103t-279.5 279.5t-103 385.5t103 385.5t279.5 279.5t385.5 103t385.5 -103t279.5 -279.5t103 -385.5z"/></svg><span>已完成</span></td><td class="op"><span class="bx bx-s"><svg class="fa " width="10.286" height="12" viewBox="0 -1536 1536 1792" style=""><path fill="currentColor" transform="scale(1,-1)" d="M363 0l91 91l-235 235l-91 -91v-107h128v-128h107zM886 928q0 22 -22 22q-10 0 -17 -7l-542 -542q-7 -7 -7 -17q0 -22 22 -22q10 0 17 7l542 542q7 7 7 17zM832 1120l416 -416l-832 -832h-416v416zM1515 1024q0 -53 -37 -90l-166 -166l-416 416l166 165q36 38 90 38 q53 0 91 -38l235 -234q37 -39 37 -91z"/></svg></span><span class="bx bx-d"><svg class="fa " width="9.429" height="12" viewBox="0 -1536 1408 1792" style=""><path fill="currentColor" transform="scale(1,-1)" d="M512 160v704q0 14 -9 23t-23 9h-64q-14 0 -23 -9t-9 -23v-704q0 -14 9 -23t23 -9h64q14 0 23 9t9 23zM768 160v704q0 14 -9 23t-23 9h-64q-14 0 -23 -9t-9 -23v-704q0 -14 9 -23t23 -9h64q14 0 23 9t9 23zM1024 160v704q0 14 -9 23t-23 9h-64q-14 0 -23 -9t-9 -23v-704 q0 -14 9 -23t23 -9h64q14 0 23 9t9 23zM480 1152h448l-48 117q-7 9 -17 11h-317q-10 -2 -17 -11zM1408 1120v-64q0 -14 -9 -23t-23 -9h-96v-948q0 -83 -47 -143.5t-113 -60.5h-832q-66 0 -113 58.5t-47 141.5v952h-96q-14 0 -23 9t-9 23v64q0 14 9 23t23 9h309l70 167 q15 37 54 63t79 26h320q40 0 79 -26t54 -63l70 -167h309q14 0 23 -9t9 -23z"/></svg></span></td></tr>
<tr class=""><td class="ck"><span class="cb"></span></td><td>1227</td><td>0x92A4599aD34939697fd4B0087F043250704f3Bc8</td><td>587</td><td>2022-10-30 02:58:05</td><td>0</td><td>33161.76</td><td class="st"><svg class="fa " width="12.000" height="14" viewBox="0 -1536 1536 1792" style=""><path fill="currentColor" transform="scale(1,-1)" d="M1536 640q0 -209 -103 -385.5t-279.5 -279.5t-385.5 -103t-385.5 103t-279.5 279.5t-103 385.5t103 385.5t279.5 279.5t385.5 103t385.5 -103t279.5 -279.5t103 -385.5z"/></svg><span>已完成</span></td><td class="op"><span class="bx bx-s"><svg class="fa " width="10.286" height="12" viewBox="0 -1536 1536 1792" style=""><path fill="currentColor" transform="scale(1,-1)" d="M363 0l91 91l-235 235l-91 -91v-107h128v-128h107zM886 928q0 22 -22 22q-10 0 -17 -7l-542 -542q-7 -7 -7 -17q0 -22 22 -22q10 0 17 7l542 542q7 7 7 17zM832 1120l416 -416l-832 -832h-416v416zM1515 1024q0 -53 -37 -90l-166 -166l-416 416l166 165q36 38 90 38 q53 0 91 -38l235 -234q37 -39 37 -91z"/></svg></span><span class="bx bx-d"><svg class="fa " width="9.429" height="12" viewBox="0 -1536 1408 1792" style=""><path fill="currentColor" transform="scale(1,-1)" d="M512 160v704q0 14 -9 23t-23 9h-64q-14 0 -23 -9t-9 -23v-704q0 -14 9 -23t23 -9h64q14 0 23 9t9 23zM768 160v704q0 14 -9 23t-23 9h-64q-14 0 -23 -9t-9 -23v-704q0 -14 9 -23t23 -9h64q14 0 23 9t9 23zM1024 160v704q0 14 -9 23t-23 9h-64q-14 0 -23 -9t-9 -23v-704 q0 -14 9 -23t23 -9h64q14 0 23 9t9 23zM480 1152h448l-48 117q-7 9 -17 11h-317q-10 -2 -17 -11zM1408 1120v-64q0 -14 -9 -23t-23 -9h-96v-948q0 -83 -47 -143.5t-113 -60.5h-832q-66 0 -113 58.5t-47 141.5v952h-96q-14 0 -23 9t-9 23v64q0 14 9 23t23 9h309l70 167 q15 37 54 63t79 26h320q40 0 79 -26t54 -63l70 -167h309q14 0 23 -9t9 -23z"/></svg></span></td></tr>
<tr class="odd"><td class="ck"><span class="cb"></span></td><td>1226</td><td>0xdB06155d5B1eb2A727C7671E76a70EF8E035345B</td><td>66</td><td>2022-10-30 02:30:52</td><td>0</td><td>5535.24</td><td class="st"><svg class="fa " width="12.000" height="14" viewBox="0 -1536 1536 1792" style=""><path fill="currentColor" transform="scale(1,-1)" d="M1536 640q0 -209 -103 -385.5t-279.5 -279.5t-385.5 -103t-385.5 103t-279.5 279.5t-103 385.5t103 385.5t279.5 279.5t385.5 103t385.5 -103t279.5 -279.5t103 -385.5z"/></svg><span>已完成</span></td><td class="op"><span class="bx bx-s"><svg class="fa " width="10.286" height="12" viewBox="0 -1536 1536 1792" style=""><path fill="currentColor" transform="scale(1,-1)" d="M363 0l91 91l-235 235l-91 -91v-107h128v-128h107zM886 928q0 22 -22 22q-10 0 -17 -7l-542 -542q-7 -7 -7 -17q0 -22 22 -22q10 0 17 7l542 542q7 7 7 17zM832 1120l416 -416l-832 -832h-416v416zM1515 1024q0 -53 -37 -90l-166 -166l-416 416l166 165q36 38 90 38 q53 0 91 -38l235 -234q37 -39 37 -91z"/></svg></span><span class="bx bx-d"><svg class="fa " width="9.429" height="12" viewBox="0 -1536 1408 1792" style=""><path fill="currentColor" transform="scale(1,-1)" d="M512 160v704q0 14 -9 23t-23 9h-64q-14 0 -23 -9t-9 -23v-704q0 -14 9 -23t23 -9h64q14 0 23 9t9 23zM768 160v704q0 14 -9 23t-23 9h-64q-14 0 -23 -9t-9 -23v-704q0 -14 9 -23t23 -9h64q14 0 23 9t9 23zM1024 160v704q0 14 -9 23t-23 9h-64q-14 0 -23 -9t-9 -23v-704 q0 -14 9 -23t23 -9h64q14 0 23 9t9 23zM480 1152h448l-48 117q-7 9 -17 11h-317q-10 -2 -17 -11zM1408 1120v-64q0 -14 -9 -23t-23 -9h-96v-948q0 -83 -47 -143.5t-113 -60.5h-832q-66 0 -113 58.5t-47 141.5v952h-96q-14 0 -23 9t-9 23v64q0 14 9 23t23 9h309l70 167 q15 37 54 63t79 26h320q40 0 79 -26t54 -63l70 -167h309q14 0 23 -9t9 -23z"/></svg></span></td></tr>
<tr class=""><td class="ck"><span class="cb"></span></td><td>1225</td><td>0x29b1c7565d72DDEfc9aC59f023Cd3dB2C0F49173</td><td>39.07</td><td>2022-10-30 02:10:05</td><td>0</td><td>3911.12</td><td class="st"><svg class="fa " width="12.000" height="14" viewBox="0 -1536 1536 1792" style=""><path fill="currentColor" transform="scale(1,-1)" d="M1536 640q0 -209 -103 -385.5t-279.5 -279.5t-385.5 -103t-385.5 103t-279.5 279.5t-103 385.5t103 385.5t279.5 279.5t385.5 103t385.5 -103t279.5 -279.5t103 -385.5z"/></svg><span>已完成</span></td><td class="op"><span class="bx bx-s"><svg class="fa " width="10.286" height="12" viewBox="0 -1536 1536 1792" style=""><path fill="currentColor" transform="scale(1,-1)" d="M363 0l91 91l-235 235l-91 -91v-107h128v-128h107zM886 928q0 22 -22 22q-10 0 -17 -7l-542 -542q-7 -7 -7 -17q0 -22 22 -22q10 0 17 7l542 542q7 7 7 17zM832 1120l416 -416l-832 -832h-416v416zM1515 1024q0 -53 -37 -90l-166 -166l-416 416l166 165q36 38 90 38 q53 0 91 -38l235 -234q37 -39 37 -91z"/></svg></span><span class="bx bx-d"><svg class="fa " width="9.429" height="12" viewBox="0 -1536 1408 1792" style=""><path fill="currentColor" transform="scale(1,-1)" d="M512 160v704q0 14 -9 23t-23 9h-64q-14 0 -23 -9t-9 -23v-704q0 -14 9 -23t23 -9h64q14 0 23 9t9 23zM768 160v704q0 14 -9 23t-23 9h-64q-14 0 -23 -9t-9 -23v-704q0 -14 9 -23t23 -9h64q14 0 23 9t9 23zM1024 160v704q0 14 -9 23t-23 9h-64q-14 0 -23 -9t-9 -23v-704 q0 -14 9 -23t23 -9h64q14 0 23 9t9 23zM480 1152h448l-48 117q-7 9 -17 11h-317q-10 -2 -17 -11zM1408 1120v-64q0 -14 -9 -23t-23 -9h-96v-948q0 -83 -47 -143.5t-113 -60.5h-832q-66 0 -113 58.5t-47 141.5v952h-96q-14 0 -23 9t-9 23v64q0 14 9 23t23 9h309l70 167 q15 37 54 63t79 26h320q40 0 79 -26t54 -63l70 -167h309q14 0 23 -9t9 -23z"/></svg></span></td></tr>
<tr class="odd"><td class="ck"><span class="cb"></span></td><td>1224</td><td>0x32f3024dD21F950997e8dD08D6c47999b797eDc7</td><td>61</td><td>2022-10-30 01:42:19</td><td>0</td><td>5006.78</td><td class="st"><svg class="fa " width="12.000" height="14" viewBox="0 -1536 1536 1792" style=""><path fill="currentColor" transform="scale(1,-1)" d="M1536 640q0 -209 -103 -385.5t-279.5 -279.5t-385.5 -103t-385.5 103t-279.5 279.5t-103 385.5t103 385.5t279.5 279.5t385.5 103t385.5 -103t279.5 -279.5t103 -385.5z"/></svg><span>已完成</span></td><td class="op"><span class="bx bx-s"><svg class="fa " width="10.286" height="12" viewBox="0 -1536 1536 1792" style=""><path fill="currentColor" transform="scale(1,-1)" d="M363 0l91 91l-235 235l-91 -91v-107h128v-128h107zM886 928q0 22 -22 22q-10 0 -17 -7l-542 -542q-7 -7 -7 -17q0 -22 22 -22q10 0 17 7l542 542q7 7 7 17zM832 1120l416 -416l-832 -832h-416v416zM1515 1024q0 -53 -37 -90l-166 -166l-416 416l166 165q36 38 90 38 q53 0 91 -38l235 -234q37 -39 37 -91z"/></svg></span><span class="bx bx-d"><svg class="fa " width="9.429" height="12" viewBox="0 -1536 1408 1792" style=""><path fill="currentColor" transform="scale(1,-1)" d="M512 160v704q0 14 -9 23t-23 9h-64q-14 0 -23 -9t-9 -23v-704q0 -14 9 -23t23 -9h64q14 0 23 9t9 23zM768 160v704q0 14 -9 23t-23 9h-64q-14 0 -23 -9t-9 -23v-704q0 -14 9 -23t23 -9h64q14 0 23 9t9 23zM1024 160v704q0 14 -9 23t-23 9h-64q-14 0 -23 -9t-9 -23v-704 q0 -14 9 -23t23 -9h64q14 0 23 9t9 23zM480 1152h448l-48 117q-7 9 -17 11h-317q-10 -2 -17 -11zM1408 1120v-64q0 -14 -9 -23t-23 -9h-96v-948q0 -83 -47 -143.5t-113 -60.5h-832q-66 0 -113 58.5t-47 141.5v952h-96q-14 0 -23 9t-9 23v64q0 14 9 23t23 9h309l70 167 q15 37 54 63t79 26h320q40 0 79 -26t54 -63l70 -167h309q14 0 23 -9t9 -23z"/></svg></span></td></tr>
<tr class=""><td class="ck"><span class="cb"></span></td><td>1223</td><td>0x3d23FeFe084fced20eb559e48ce00DFCBa427518</td><td>1.42</td><td>2022-10-30 01:32:36</td><td>0</td><td>285.2</td><td class="st"><svg class="fa " width="12.000" height="14" viewBox="0 -1536 1536 1792" style=""><path fill="currentColor" transform="scale(1,-1)" d="M1536 640q0 -209 -103 -385.5t-279.5 -279.5t-385.5 -103t-385.5 103t-279.5 279.5t-103 385.5t103 385.5t279.5 279.5t385.5 103t385.5 -103t279.5 -279.5t103 -385.5z"/></svg><span>已完成</span></td><td class="op"><span class="bx bx-s"><svg class="fa " width="10.286" height="12" viewBox="0 -1536 1536 1792" style=""><path fill="currentColor" transform="scale(1,-1)" d="M363 0l91 91l-235 235l-91 -91v-107h128v-128h107zM886 928q0 22 -22 22q-10 0 -17 -7l-542 -542q-7 -7 -7 -17q0 -22 22 -22q10 0 17 7l542 542q7 7 7 17zM832 1120l416 -416l-832 -832h-416v416zM1515 1024q0 -53 -37 -90l-166 -166l-416 416l166 165q36 38 90 38 q53 0 91 -38l235 -234q37 -39 37 -91z"/></svg></span><span class="bx bx-d"><svg class="fa " width="9.429" height="12" viewBox="0 -1536 1408 1792" style=""><path fill="currentColor" transform="scale(1,-1)" d="M512 160v704q0 14 -9 23t-23 9h-64q-14 0 -23 -9t-9 -23v-704q0 -14 9 -23t23 -9h64q14 0 23 9t9 23zM768 160v704q0 14 -9 23t-23 9h-64q-14 0 -23 -9t-9 -23v-704q0 -14 9 -23t23 -9h64q14 0 23 9t9 23zM1024 160v704q0 14 -9 23t-23 9h-64q-14 0 -23 -9t-9 -23v-704 q0 -14 9 -23t23 -9h64q14 0 23 9t9 23zM480 1152h448l-48 117q-7 9 -17 11h-317q-10 -2 -17 -11zM1408 1120v-64q0 -14 -9 -23t-23 -9h-96v-948q0 -83 -47 -143.5t-113 -60.5h-832q-66 0 -113 58.5t-47 141.5v952h-96q-14 0 -23 9t-9 23v64q0 14 9 23t23 9h309l70 167 q15 37 54 63t79 26h320q40 0 79 -26t54 -63l70 -167h309q14 0 23 -9t9 -23z"/></svg></span></td></tr>
<tr class="odd"><td class="ck"><span class="cb"></span></td><td>1222</td><td>0x33EBF2CEE7316a12dE908Aab48512B41A9640daA</td><td>66</td><td>2022-10-30 01:06:57</td><td>0</td><td>5537.34</td><td class="st"><svg class="fa " width="12.000" height="14" viewBox="0 -1536 1536 1792" style=""><path fill="currentColor" transform="scale(1,-1)" d="M1536 640q0 -209 -103 -385.5t-279.5 -279.5t-385.5 -103t-385.5 103t-279.5 279.5t-103 385.5t103 385.5t279.5 279.5t385.5 103t385.5 -103t279.5 -279.5t103 -385.5z"/></svg><span>已完成</span></td><td class="op"><span class="bx bx-s"><svg class="fa " width="10.286" height="12" viewBox="0 -1536 1536 1792" style=""><path fill="currentColor" transform="scale(1,-1)" d="M363 0l91 91l-235 235l-91 -91v-107h128v-128h107zM886 928q0 22 -22 22q-10 0 -17 -7l-542 -542q-7 -7 -7 -17q0 -22 22 -22q10 0 17 7l542 542q7 7 7 17zM832 1120l416 -416l-832 -832h-416v416zM1515 1024q0 -53 -37 -90l-166 -166l-416 416l166 165q36 38 90 38 q53 0 91 -38l235 -234q37 -39 37 -91z"/></svg></span><span class="bx bx-d"><svg class="fa " width="9.429" height="12" viewBox="0 -1536 1408 1792" style=""><path fill="currentColor" transform="scale(1,-1)" d="M512 160v704q0 14 -9 23t-23 9h-64q-14 0 -23 -9t-9 -23v-704q0 -14 9 -23t23 -9h64q14 0 23 9t9 23zM768 160v704q0 14 -9 23t-23 9h-64q-14 0 -23 -9t-9 -23v-704q0 -14 9 -23t23 -9h64q14 0 23 9t9 23zM1024 160v704q0 14 -9 23t-23 9h-64q-14 0 -23 -9t-9 -23v-704 q0 -14 9 -23t23 -9h64q14 0 23 9t9 23zM480 1152h448l-48 117q-7 9 -17 11h-317q-10 -2 -17 -11zM1408 1120v-64q0 -14 -9 -23t-23 -9h-96v-948q0 -83 -47 -143.5t-113 -60.5h-832q-66 0 -113 58.5t-47 141.5v952h-96q-14 0 -23 9t-9 23v64q0 14 9 23t23 9h309l70 167 q15 37 54 63t79 26h320q40 0 79 -26t54 -63l70 -167h309q14 0 23 -9t9 -23z"/></svg></span></td></tr>
<tr class=""><td class="ck"><span class="cb"></span></td><td>1221</td><td>0x62D4501326778e927b49351e17Fe83441429c07f</td><td>1192</td><td>2022-10-30 01:03:35</td><td>0</td><td>60827.48</td><td class="st"><svg class="fa " width="12.000" height="14" viewBox="0 -1536 1536 1792" style=""><path fill="currentColor" transform="scale(1,-1)" d="M1536 640q0 -209 -103 -385.5t-279.5 -279.5t-385.5 -103t-385.5 103t-279.5 279.5t-103 385.5t103 385.5t279.5 279.5t385.5 103t385.5 -103t279.5 -279.5t103 -385.5z"/></svg><span>已完成</span></td><td class="op"><span class="bx bx-s"><svg class="fa " width="10.286" height="12" viewBox="0 -1536 1536 1792" style=""><path fill="currentColor" transform="scale(1,-1)" d="M363 0l91 91l-235 235l-91 -91v-107h128v-128h107zM886 928q0 22 -22 22q-10 0 -17 -7l-542 -542q-7 -7 -7 -17q0 -22 22 -22q10 0 17 7l542 542q7 7 7 17zM832 1120l416 -416l-832 -832h-416v416zM1515 1024q0 -53 -37 -90l-166 -166l-416 416l166 165q36 38 90 38 q53 0 91 -38l235 -234q37 -39 37 -91z"/></svg></span><span class="bx bx-d"><svg class="fa " width="9.429" height="12" viewBox="0 -1536 1408 1792" style=""><path fill="currentColor" transform="scale(1,-1)" d="M512 160v704q0 14 -9 23t-23 9h-64q-14 0 -23 -9t-9 -23v-704q0 -14 9 -23t23 -9h64q14 0 23 9t9 23zM768 160v704q0 14 -9 23t-23 9h-64q-14 0 -23 -9t-9 -23v-704q0 -14 9 -23t23 -9h64q14 0 23 9t9 23zM1024 160v704q0 14 -9 23t-23 9h-64q-14 0 -23 -9t-9 -23v-704 q0 -14 9 -23t23 -9h64q14 0 23 9t9 23zM480 1152h448l-48 117q-7 9 -17 11h-317q-10 -2 -17 -11zM1408 1120v-64q0 -14 -9 -23t-23 -9h-96v-948q0 -83 -47 -143.5t-113 -60.5h-832q-66 0 -113 58.5t-47 141.5v952h-96q-14 0 -23 9t-9 23v64q0 14 9 23t23 9h309l70 167 q15 37 54 63t79 26h320q40 0 79 -26t54 -63l70 -167h309q14 0 23 -9t9 -23z"/></svg></span></td></tr>
        </tbody>
      </table>
      <div class="pfoot">
        <div class="pinfo">显示第 1 到第 10 条记录，总共 1118 条记录 每页显示 <span class="psize">10 <i class="caret up"></i></span> 条记录</div>
        <div class="pager"><span class="jump"><span class="jin"></span><span class="jbtn">跳转</span></span><ul><li>上一页</li><li class="active">1</li><li>2</li><li>3</li><li>4</li><li>5</li><li class="dots">...</li><li>112</li><li>下一页</li></ul></div>
      </div>
    </div>
  </div>
</div>
<div class="wmlayer"><div class="wm" style="left:-130.1px;top:532.4px"><i>v</i><i>i</i><i>p</i><i class="d">.</i><i>g</i><i>f</i><i>y</i><i>m</i><i class="d">.</i><i>c</i><i>o</i><i>m</i></div><div class="wm" style="left:11.3px;top:391.0px"><i>v</i><i>i</i><i>p</i><i class="d">.</i><i>g</i><i>f</i><i>y</i><i>m</i><i class="d">.</i><i>c</i><i>o</i><i>m</i></div><div class="wm" style="left:152.7px;top:249.6px"><i>v</i><i>i</i><i>p</i><i class="d">.</i><i>g</i><i>f</i><i>y</i><i>m</i><i class="d">.</i><i>c</i><i>o</i><i>m</i></div><div class="wm" style="left:294.1px;top:108.2px"><i>v</i><i>i</i><i>p</i><i class="d">.</i><i>g</i><i>f</i><i>y</i><i>m</i><i class="d">.</i><i>c</i><i>o</i><i>m</i></div><div class="wm" style="left:435.5px;top:-33.2px"><i>v</i><i>i</i><i>p</i><i class="d">.</i><i>g</i><i>f</i><i>y</i><i>m</i><i class="d">.</i><i>c</i><i>o</i><i>m</i></div><div class="wm" style="left:176.4px;top:838.9px"><i>v</i><i>i</i><i>p</i><i class="d">.</i><i>g</i><i>f</i><i>y</i><i>m</i><i class="d">.</i><i>c</i><i>o</i><i>m</i></div><div class="wm" style="left:317.8px;top:697.5px"><i>v</i><i>i</i><i>p</i><i class="d">.</i><i>g</i><i>f</i><i>y</i><i>m</i><i class="d">.</i><i>c</i><i>o</i><i>m</i></div><div class="wm" style="left:459.2px;top:556.1px"><i>v</i><i>i</i><i>p</i><i class="d">.</i><i>g</i><i>f</i><i>y</i><i>m</i><i class="d">.</i><i>c</i><i>o</i><i>m</i></div><div class="wm" style="left:600.6px;top:414.7px"><i>v</i><i>i</i><i>p</i><i class="d">.</i><i>g</i><i>f</i><i>y</i><i>m</i><i class="d">.</i><i>c</i><i>o</i><i>m</i></div><div class="wm" style="left:742.0px;top:273.3px"><i>v</i><i>i</i><i>p</i><i class="d">.</i><i>g</i><i>f</i><i>y</i><i>m</i><i class="d">.</i><i>c</i><i>o</i><i>m</i></div><div class="wm" style="left:883.4px;top:131.9px"><i>v</i><i>i</i><i>p</i><i class="d">.</i><i>g</i><i>f</i><i>y</i><i>m</i><i class="d">.</i><i>c</i><i>o</i><i>m</i></div><div class="wm" style="left:1024.8px;top:-9.5px"><i>v</i><i>i</i><i>p</i><i class="d">.</i><i>g</i><i>f</i><i>y</i><i>m</i><i class="d">.</i><i>c</i><i>o</i><i>m</i></div><div class="wm" style="left:1166.2px;top:-150.9px"><i>v</i><i>i</i><i>p</i><i class="d">.</i><i>g</i><i>f</i><i>y</i><i>m</i><i class="d">.</i><i>c</i><i>o</i><i>m</i></div><div class="wm" style="left:765.7px;top:862.6px"><i>v</i><i>i</i><i>p</i><i class="d">.</i><i>g</i><i>f</i><i>y</i><i>m</i><i class="d">.</i><i>c</i><i>o</i><i>m</i></div><div class="wm" style="left:907.1px;top:721.2px"><i>v</i><i>i</i><i>p</i><i class="d">.</i><i>g</i><i>f</i><i>y</i><i>m</i><i class="d">.</i><i>c</i><i>o</i><i>m</i></div><div class="wm" style="left:1048.5px;top:579.8px"><i>v</i><i>i</i><i>p</i><i class="d">.</i><i>g</i><i>f</i><i>y</i><i>m</i><i class="d">.</i><i>c</i><i>o</i><i>m</i></div><div class="wm" style="left:1189.9px;top:438.4px"><i>v</i><i>i</i><i>p</i><i class="d">.</i><i>g</i><i>f</i><i>y</i><i>m</i><i class="d">.</i><i>c</i><i>o</i><i>m</i></div><div class="wm" style="left:1331.3px;top:297.0px"><i>v</i><i>i</i><i>p</i><i class="d">.</i><i>g</i><i>f</i><i>y</i><i>m</i><i class="d">.</i><i>c</i><i>o</i><i>m</i></div><div class="wm" style="left:1472.7px;top:155.6px"><i>v</i><i>i</i><i>p</i><i class="d">.</i><i>g</i><i>f</i><i>y</i><i>m</i><i class="d">.</i><i>c</i><i>o</i><i>m</i></div><div class="wm" style="left:1614.1px;top:14.2px"><i>v</i><i>i</i><i>p</i><i class="d">.</i><i>g</i><i>f</i><i>y</i><i>m</i><i class="d">.</i><i>c</i><i>o</i><i>m</i></div><div class="wm" style="left:1755.5px;top:-127.2px"><i>v</i><i>i</i><i>p</i><i class="d">.</i><i>g</i><i>f</i><i>y</i><i>m</i><i class="d">.</i><i>c</i><i>o</i><i>m</i></div><div class="wm" style="left:1355.0px;top:886.3px"><i>v</i><i>i</i><i>p</i><i class="d">.</i><i>g</i><i>f</i><i>y</i><i>m</i><i class="d">.</i><i>c</i><i>o</i><i>m</i></div><div class="wm" style="left:1496.4px;top:744.9px"><i>v</i><i>i</i><i>p</i><i class="d">.</i><i>g</i><i>f</i><i>y</i><i>m</i><i class="d">.</i><i>c</i><i>o</i><i>m</i></div><div class="wm" style="left:1637.8px;top:603.5px"><i>v</i><i>i</i><i>p</i><i class="d">.</i><i>g</i><i>f</i><i>y</i><i>m</i><i class="d">.</i><i>c</i><i>o</i><i>m</i></div><div class="wm" style="left:1779.2px;top:462.1px"><i>v</i><i>i</i><i>p</i><i class="d">.</i><i>g</i><i>f</i><i>y</i><i>m</i><i class="d">.</i><i>c</i><i>o</i><i>m</i></div><div class="wm" style="left:1920.6px;top:320.7px"><i>v</i><i>i</i><i>p</i><i class="d">.</i><i>g</i><i>f</i><i>y</i><i>m</i><i class="d">.</i><i>c</i><i>o</i><i>m</i></div></div>
</div>
</body></html>
